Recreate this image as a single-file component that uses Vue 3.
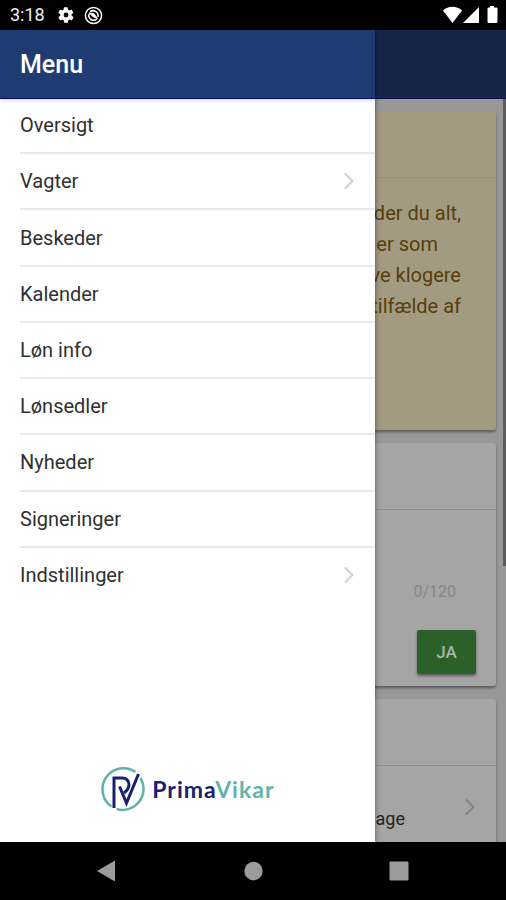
<script setup>
const items = [
  { label: 'Oversigt' },
  { label: 'Vagter', nested: true },
  { label: 'Beskeder' },
  { label: 'Kalender' },
  { label: 'Løn info' },
  { label: 'Lønsedler' },
  { label: 'Nyheder' },
  { label: 'Signeringer' },
  { label: 'Indstillinger', nested: true },
]
</script>

<template>
  <div class="phone">
    <header class="status">
      <span class="clock">3:18</span>
      <svg class="gear" width="18" height="18" viewBox="0 0 24 24" aria-hidden="true">
        <path fill="#fff" fill-rule="evenodd" d="M19.4 13a7.8 7.8 0 0 0 0-2l2.2-1.700a.5.5 0 0 0 .1-.6l-2.100-3.600a.5.5 0 0 0-.6-.2l-2.600 1a7.700 7.700 0 0 0-1.700-1l-.4-2.700a.5.5 0 0 0-.5-.4h-4.200a.5.5 0 0 0-.5.4l-.4 2.700a7.700 7.700 0 0 0-1.700 1l-2.600-1a.5.5 0 0 0-.6.2L1.900 8.700a.5.5 0 0 0 .1.6L4.400 11a7.800 7.800 0 0 0 0 2l-2.300 1.700a.5.5 0 0 0-.1.6l2.100 3.600c.1.2.4.3.6.2l2.600-1a7.700 7.700 0 0 0 1.700 1l.4 2.700c0 .2.200.4.500.4h4.200c.3 0 .5-.2.5-.4l.4-2.700a7.700 7.700 0 0 0 1.700-1l2.600 1c.2.1.5 0 .6-.2l2.100-3.600a.5.5 0 0 0-.1-.6zM12 15.200a3.200 3.200 0 1 1 0-6.400 3.200 3.200 0 0 1 0 6.400z" />
      </svg>
      <svg class="sync" width="19" height="19" viewBox="0 0 20 20" fill="none" stroke="#fff" aria-hidden="true">
        <circle cx="10" cy="10" r="8.500" stroke-width="1.600" />
        <path d="M5.300 8.500A5 5 0 0 0 13.500 13.600" stroke-width="1.600" />
        <path d="M6.500 6C10 3.300 15.500 6 14.800 11.500" stroke-width="1.600" />
        <path d="M5.200 7.200 10.500 8 14.500 13.300 9.800 11.500z" fill="#fff" stroke-width=".8" />
      </svg>
      <svg class="signals" width="55" height="18" viewBox="0 0 55 18" fill="#fff" aria-hidden="true">
        <path d="M0 4.500C5-.5 14-.5 19 4.500L9.500 17z" />
        <path d="M36 1v16H20z" />
        <path d="M47 1.500V0h4v1.500h2.500q1 0 1 1V16q0 1-1 1h-8q-1 0-1-1V2.500q0-1 1-1z" />
      </svg>
    </header>

    <div class="screen">
      <main class="page">
        <div class="toolbar"></div>
        <div class="cards">
          <section class="card notice">
            <div class="card-head"></div>
            <p class="notice-text">
              <span class="line">finder du alt,</span>
              <span class="line short">er som</span>
              <span class="line">blive klogere</span>
              <span class="line">tilfælde af</span>
            </p>
          </section>
          <section class="card answer">
            <div class="card-head"></div>
            <div class="answer-body">
              <span class="count">0/120</span>
              <button class="yes" type="button">JA</button>
            </div>
          </section>
          <section class="card days">
            <div class="card-head"></div>
            <a class="days-row" href="#">
              <span class="days-label">lage</span>
              <svg class="chevron" width="12" height="18" viewBox="0 0 12 18" aria-hidden="true">
                <path d="M2 1.500 9.500 9 2 16.500" />
              </svg>
            </a>
          </section>
        </div>
        <div class="scrollbar"></div>
      </main>

      <aside class="drawer">
        <h1 class="title">Menu</h1>
        <nav>
          <ul class="list">
            <li v-for="item in items" :key="item.label" class="entry">
              <a class="entry-link" href="#">
                <span>{{ item.label }}</span>
                <svg v-if="item.nested" class="chevron" width="12" height="18" viewBox="0 0 12 18" aria-hidden="true">
                  <path d="M2 1.500 9.500 9 2 16.500" />
                </svg>
              </a>
            </li>
          </ul>
        </nav>
        <div class="brand">
          <svg width="46" height="46" viewBox="0 0 46 46" fill="none" aria-hidden="true">
            <path d="M35.500 6A21 21 0 0 0 11.500 40.500M16.500 43A21 21 0 0 0 40.500 12" stroke="#5fb3a9" stroke-width="2.500" />
            <path d="M14 42V12h8.500a6.500 6.500 0 0 1 6.500 6.500c0 4-2.500 6.500-5 8.500" stroke="#17216f" stroke-width="3" />
            <path d="M19.500 20.500 26.500 37 38.500 8" stroke="#17216f" stroke-width="3" />
          </svg>
          <span class="brand-name">Prima<span class="brand-tail">Vikar</span></span>
        </div>
      </aside>
    </div>

    <footer class="navbar">
      <button class="key" type="button" aria-label="Back">
        <svg width="20" height="22" viewBox="0 0 20 22"><path d="M0 11 18 .500v21z" /></svg>
      </button>
      <button class="key" type="button" aria-label="Home">
        <svg width="20" height="22" viewBox="0 0 20 22"><circle cx="10.500" cy="11" r="9.200" /></svg>
      </button>
      <button class="key" type="button" aria-label="Recent apps">
        <svg width="20" height="22" viewBox="0 0 20 22"><rect x=".5" y="1.500" width="19" height="19" rx="1" /></svg>
      </button>
    </footer>
  </div>
</template>

<style>
body {
  margin: 0;
}
</style>

<style scoped>
.phone {
  display: flex;
  flex-direction: column;
  min-height: 100vh;
  background: #000;
  font-family: Roboto, "Liberation Sans", sans-serif;
}

.status {
  display: flex;
  align-items: center;
  height: 30px;
  padding: 0 8px 0 10px;
  box-sizing: border-box;
  color: #eee;
}

.clock {
  font-size: 18px;
  line-height: 32px;
}

.gear {
  margin-left: 12px;
}

.sync {
  margin-left: 9px;
}

.signals {
  margin-left: auto;
}

.screen {
  flex: 1;
  display: grid;
  grid-template-columns: 20fr 7fr;
  grid-template-rows: 1fr;
}

.page {
  grid-column: 1 / 3;
  grid-row: 1;
  position: relative;
  display: flex;
  flex-direction: column;
  background: #989898;
  overflow: hidden;
}

.toolbar {
  height: 69px;
  background: #152748;
  border-bottom: 1px solid #0c0c4c;
  box-sizing: border-box;
}

.cards {
  flex: 1;
  display: flex;
  flex-direction: column;
  gap: 13px;
  padding: 12px 10px 0 12px;
}

.card {
  background: #a5a5a5;
  border-radius: 3px;
  box-shadow: 0 2px 3px rgba(0, 0, 0, 0.4);
}

.card-head {
  height: 67px;
  border-bottom: 1px solid #8d8d8d;
  box-sizing: border-box;
}

.notice {
  height: 319px;
  background: #a39b81;
}

.notice .card-head {
  border-color: #a68f5c;
}

.notice-text {
  margin: 0;
  padding: 20px 35px 0 0;
  color: #553f0c;
  font-size: 20px;
  line-height: 31px;
  text-align: right;
}

.line {
  display: block;
}

.short {
  padding-right: 23px;
}

.answer {
  height: 243px;
}

.answer-body {
  display: flex;
  flex-direction: column;
  align-items: flex-end;
  gap: 28px;
  padding: 72px 20px 0 0;
}

.count {
  padding-right: 20px;
  color: #858585;
  font-size: 16px;
  line-height: 20px;
}

.yes {
  width: 59px;
  height: 44px;
  padding: 0;
  border: 0;
  border-radius: 2px;
  background: #2b6128;
  box-shadow: 0 2px 3px rgba(0, 0, 0, 0.45);
  color: #a9b5a8;
  font-family: inherit;
  font-size: 17px;
  font-weight: 500;
}

.days {
  flex: 1;
  border-radius: 3px 3px 0 0;
}

.days-row {
  display: flex;
  align-items: center;
  justify-content: flex-end;
  gap: 59px;
  padding: 19px 20px 0 0;
  text-decoration: none;
  color: #222;
  font-size: 18px;
  line-height: 20px;
}

.days-label {
  padding-top: 24px;
}

.chevron path {
  fill: none;
  stroke: #cfcfcf;
  stroke-width: 2;
}

.days-row .chevron path {
  stroke: #838383;
}

.scrollbar {
  position: absolute;
  top: 69px;
  right: 0;
  width: 3px;
  height: 467px;
  background: #5c5c5c;
}

.drawer {
  grid-column: 1;
  grid-row: 1;
  z-index: 1;
  display: flex;
  flex-direction: column;
  background: #fff;
  box-shadow: 0 0 5px rgba(0, 0, 0, 0.5);
  clip-path: inset(0 -12px 0 0);
}

.title {
  position: relative;
  margin: 0;
  padding-left: 20px;
  height: 69px;
  box-sizing: border-box;
  border-bottom: 1px solid #10105e;
  background: #1f3c72;
  box-shadow: 0 1px 3px rgba(40, 30, 110, 0.25);
  color: #fff;
  font-size: 25px;
  font-weight: 500;
  line-height: 70px;
}

.list {
  display: grid;
  grid-auto-rows: 1fr;
  height: 506px;
  margin: -1px 0 0;
  padding: 0 0 0 20px;
  list-style: none;
}

.entry {
  border-bottom: 2px solid #e8e8e8;
}

.entry:last-child {
  border-color: transparent;
}

.entry-link {
  display: flex;
  align-items: center;
  justify-content: space-between;
  height: 100%;
  padding-right: 20px;
  color: #303030;
  font-size: 20px;
  line-height: 24px;
  text-decoration: none;
}

.brand {
  display: flex;
  align-items: center;
  justify-content: center;
  gap: 6px;
  margin-top: auto;
  padding-bottom: 30px;
}

.brand-name {
  color: #17216f;
  font-family: Lato, sans-serif;
  font-size: 23px;
  font-weight: 700;
  letter-spacing: 1px;
}

.brand-tail {
  color: #5fb3a9;
}

.navbar {
  display: flex;
  justify-content: space-between;
  align-items: center;
  height: 58px;
  padding: 0 97px;
}

.key {
  display: flex;
  padding: 0;
  border: 0;
  background: none;
}

.key svg {
  fill: #9b9b9b;
}
</style>
